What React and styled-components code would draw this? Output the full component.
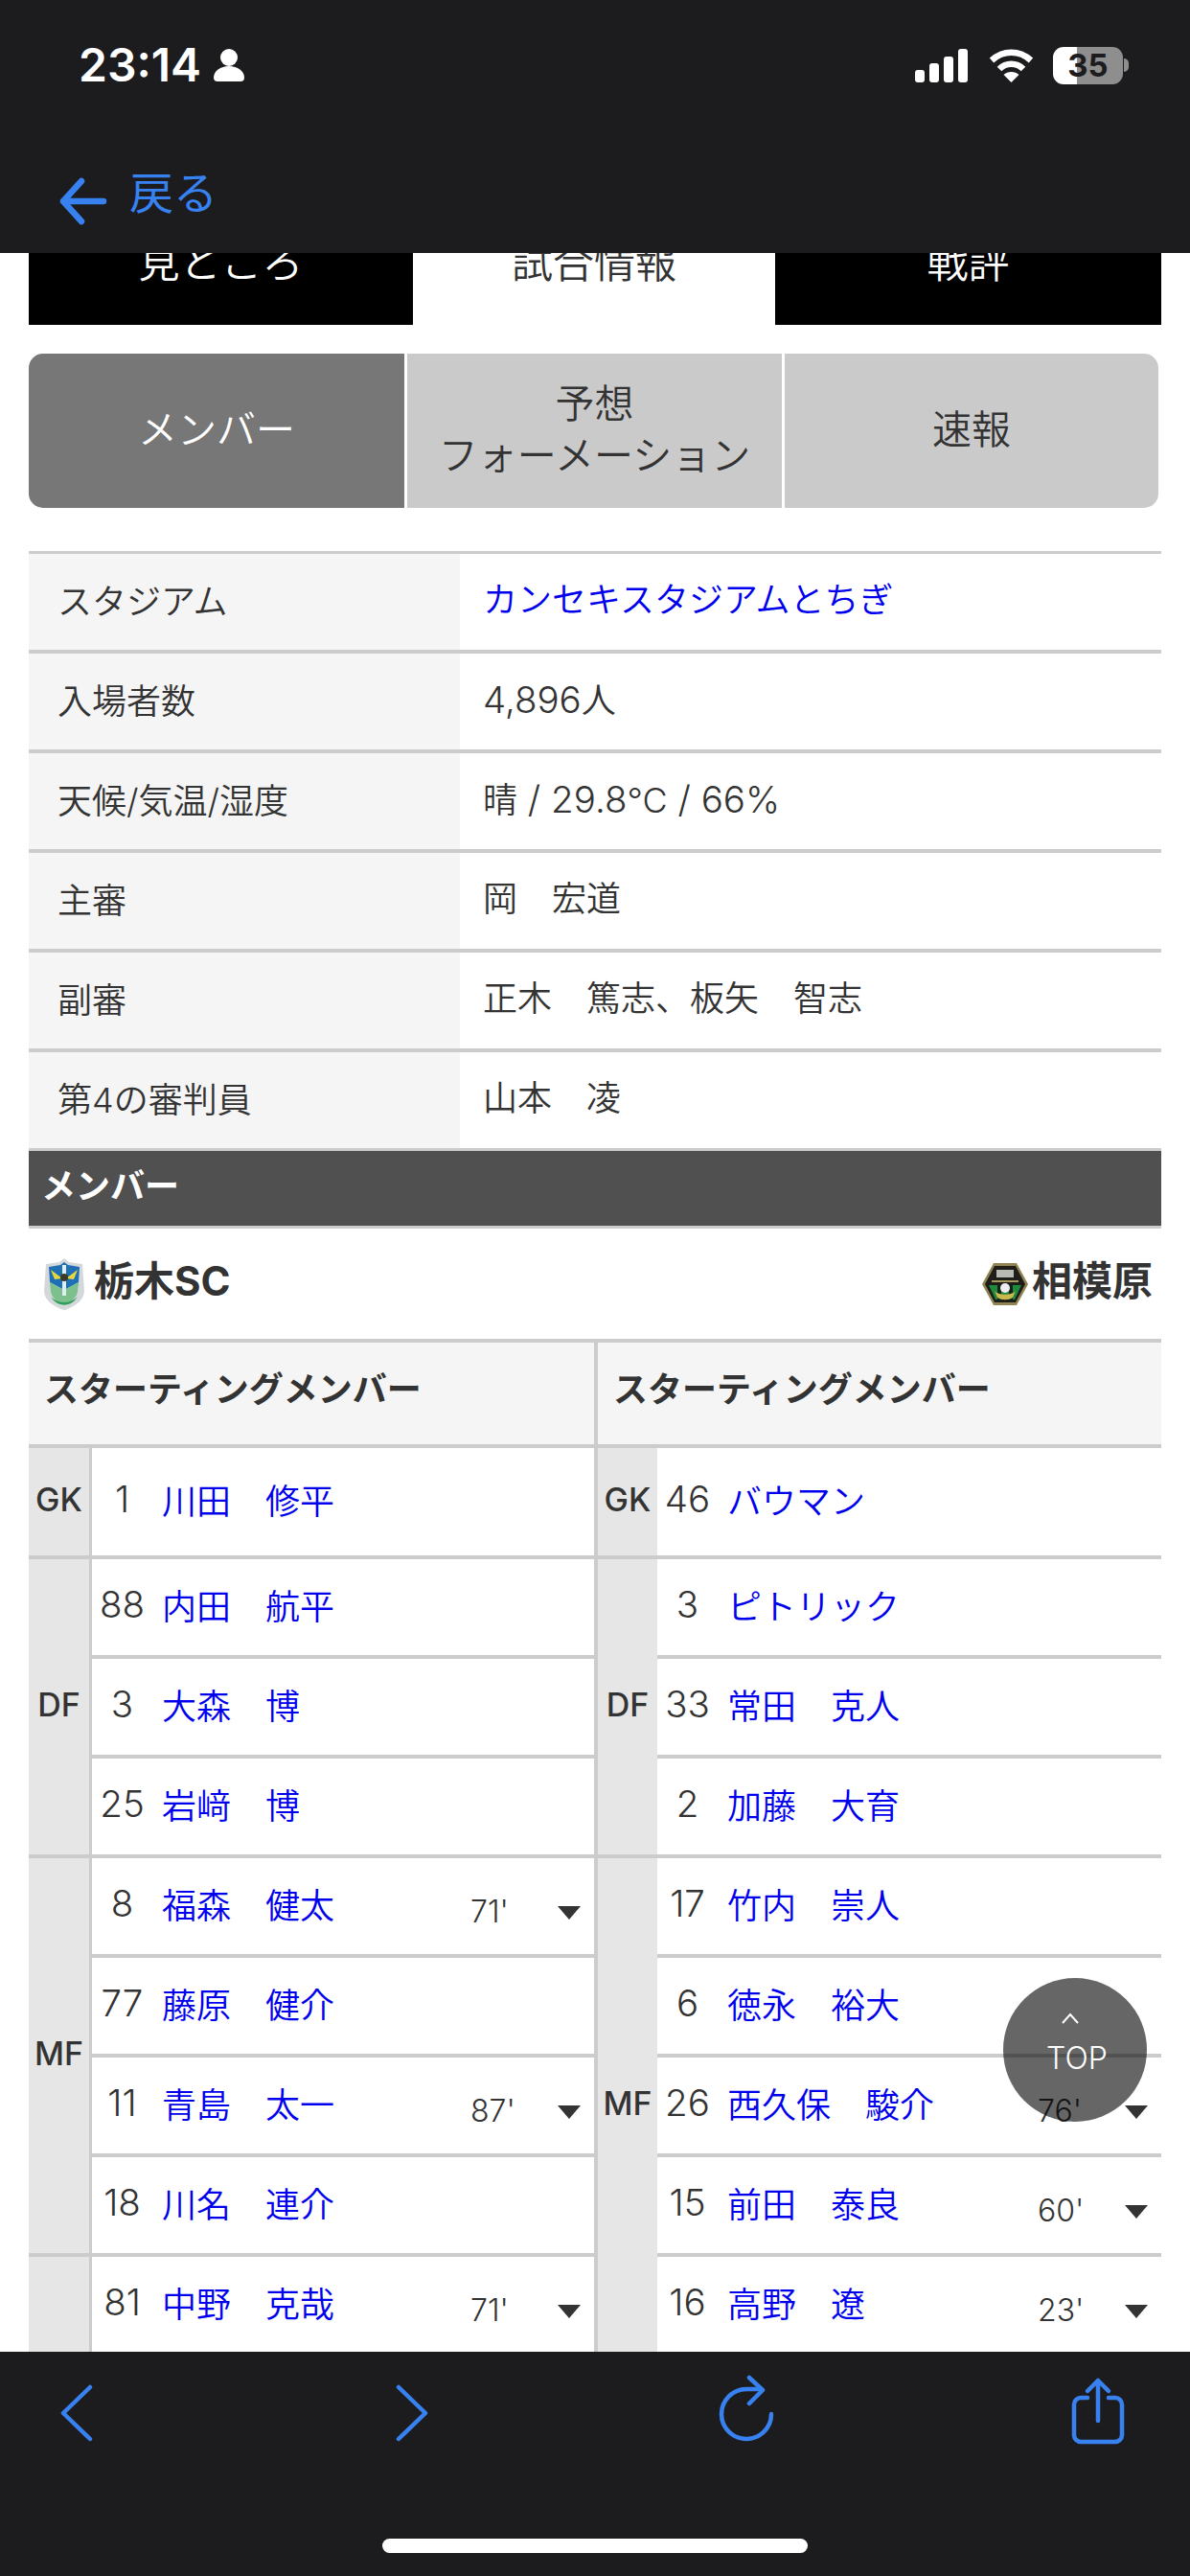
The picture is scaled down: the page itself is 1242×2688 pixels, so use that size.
import React from 'react';
import styled, { createGlobalStyle } from 'styled-components';

const GlobalStyle = createGlobalStyle`
  html, body {
    margin: 0;
    padding: 0;
    background: #fff;
  }
  body {
    font-family: Inter, "Noto Sans CJK JP", sans-serif;
    font-weight: 350;
    color: #333;
  }
`;

const BLUE = '#3781f0';
const LINE = '#ccc';
const LINK = '#0000ee';

const Page = styled.div`
  position: relative;
  width: 1242px;
  height: 2688px;
  display: flex;
  flex-direction: column;
  overflow: hidden;
`;

// Safari chrome, top
const TopBar = styled.header`
  position: relative;
  z-index: 2;
  flex: none;
  height: 264px;
  background: #1c1c1e;
  box-sizing: border-box;
  padding-top: 40px;
`;

const StatusRow = styled.div`
  display: flex;
  align-items: center;
  height: 56px;
  padding: 0 64px 0 82px;
`;

const Clock = styled.span`
  font-size: 48px;
  font-weight: 600;
  line-height: 56px;
  color: #fff;
`;

const PersonIcon = styled.svg`
  width: 32px;
  height: 34px;
  margin-left: 13px;
  fill: #fff;
`;

const StatusRight = styled.div`
  display: flex;
  align-items: center;
  margin-left: auto;
`;

const SignalBars = styled.div`
  display: flex;
  align-items: flex-end;
  gap: 5px;
  height: 35px;
`;

const SignalBar = styled.i`
  display: block;
  width: 10px;
  height: ${p => p.$h}px;
  border-radius: 3px;
  background: #fff;
`;

const WifiIcon = styled.svg`
  width: 47px;
  height: 36px;
  margin-left: 22px;
`;

const Battery = styled.div`
  width: 73px;
  height: 39px;
  margin-left: 20px;
  border-radius: 11px;
  background: linear-gradient(90deg, #fff 0 25px, #8e8e8e 25px);
  display: flex;
  align-items: center;
  justify-content: center;
  font-size: 33px;
  font-weight: 700;
  line-height: 39px;
  color: #1c1c1e;
`;

const BatteryNub = styled.i`
  display: block;
  width: 5px;
  height: 14px;
  margin-left: 1px;
  border-radius: 0 5px 5px 0;
  background: #8e8e8e;
`;

const BackRow = styled.div`
  display: flex;
  align-items: center;
  margin-top: 69px;
  padding-left: 59px;
  color: ${BLUE};
  font-size: 46px;
  font-weight: 400;
  line-height: 56px;
`;

const BackArrow = styled.svg`
  width: 54px;
  height: 54px;
  margin-right: 22px;
  margin-top: 18px;
`;

// Page body
const Content = styled.main`
  position: relative;
  flex: 1;
  min-height: 0;
  overflow: hidden;
  padding: 0 30px;
`;

const Tabs = styled.nav`
  display: grid;
  grid-template-columns: 401px 378px 403px;
  margin-top: -35px;
`;

const Tab = styled.div`
  height: 110px;
  box-sizing: border-box;
  padding-top: 17px;
  text-align: center;
  font-size: 43px;
  line-height: 56px;
  background: ${p => (p.$active ? '#fff' : '#000')};
  color: ${p => (p.$active ? '#333' : '#fff')};
`;

const Segments = styled.div`
  display: grid;
  grid-template-columns: 392px 391px 1fr;
  gap: 3px;
  width: 1179px;
  height: 161px;
  margin-top: 30px;
  border-radius: 15px;
  overflow: hidden;
`;

const Segment = styled.div`
  display: flex;
  align-items: center;
  justify-content: center;
  box-sizing: border-box;
  padding-bottom: 4px;
  text-align: center;
  font-size: 41px;
  line-height: 54px;
  background: ${p => (p.$active ? '#777' : '#cacaca')};
  color: ${p => (p.$active ? '#fff' : '#333')};
`;

const InfoTable = styled.section`
  margin-top: 45px;
  border-top: 3px solid ${LINE};
`;

const InfoRow = styled.div`
  display: grid;
  grid-template-columns: 450px 1fr;
  height: 100px;
  border-bottom: ${p => (p.$last ? 3 : 4)}px solid ${LINE};
`;

const InfoLabel = styled.div`
  display: flex;
  align-items: center;
  padding: 0 0 7px 30px;
  background: #f5f5f5;
  font-size: 36px;
`;

const InfoValue = styled.div`
  padding-left: 24px;
  font-size: 36px;
  line-height: 96px;
  white-space: pre;
`;

const Latin = styled.span`
  font-size: 38.5px;
`;

const Link = styled.span`
  color: ${LINK};
`;

const SectionBar = styled.h2`
  margin: 0;
  height: 78px;
  box-sizing: border-box;
  padding-left: 13px;
  background: #505050;
  color: #fff;
  font-size: 36px;
  font-weight: 700;
  line-height: 74px;
`;

const Teams = styled.div`
  display: flex;
  align-items: center;
  justify-content: space-between;
  height: 115px;
  border-top: 3px solid ${LINE};
  padding: 0 9px 0 15px;
`;

const Team = styled.div`
  display: flex;
  align-items: center;
  gap: ${p => p.$gap}px;
`;

const TeamName = styled.span`
  margin-top: -6px;
  font-size: 42px;
  font-weight: 700;
  line-height: 50px;
`;

const MemberTable = styled.section`
  display: grid;
  grid-template-columns: 590px 4px 1fr;
  border-top: 4px solid ${LINE};
`;

const Divider = styled.div`
  background: ${LINE};
`;

const Column = styled.div`
  display: flex;
  flex-direction: column;
  min-width: 0;
`;

const ColumnHead = styled.div`
  height: 106px;
  box-sizing: border-box;
  padding: 0 0 14px 16px;
  display: flex;
  align-items: center;
  background: #f5f5f5;
  font-size: 36px;
  font-weight: 700;
`;

const Group = styled.div`
  display: flex;
  border-top: 4px solid ${LINE};
`;

const PosCell = styled.div`
  flex: none;
  width: ${p => (p.$right ? 62 : 66)}px;
  box-sizing: border-box;
  padding-bottom: 6px;
  display: flex;
  align-items: center;
  justify-content: center;
  background: #e6e6e6;
  border-right: ${p => (p.$right ? 'none' : `3px solid ${LINE}`)};
  font-size: 34px;
  font-weight: 500;
`;

const PosRows = styled.div`
  flex: 1;
  min-width: 0;
  display: flex;
  flex-direction: column;
`;

const PlayerRow = styled.div`
  display: flex;
  align-items: center;
  height: ${p => (p.$tall ? 112 : 100)}px;
  padding-bottom: 7px;
  box-sizing: border-box;
  & + & {
    border-top: 4px solid ${LINE};
    height: 104px;
  }
`;

const Num = styled.span`
  flex: none;
  width: 63px;
  text-align: center;
  font-size: 38.5px;
`;

const Name = styled.span`
  margin-left: 10px;
  font-size: 36px;
  color: ${LINK};
  white-space: pre;
`;

const SubInfo = styled.div`
  flex: none;
  width: 115px;
  margin: 0 14px 0 auto;
  padding-top: 17px;
  display: flex;
  align-items: center;
  justify-content: space-between;
  font-size: 32px;
`;

const SubMark = styled.i`
  display: block;
  width: 0;
  height: 0;
  margin-top: 4px;
  border-left: 12px solid transparent;
  border-right: 12px solid transparent;
  border-top: 14px solid #333;
`;

const TopButton = styled.div`
  position: absolute;
  left: 1047px;
  top: 2064px;
  z-index: 1;
  width: 150px;
  height: 150px;
  border-radius: 50%;
  background: rgba(0, 0, 0, 0.6);
  display: flex;
  flex-direction: column;
  align-items: center;
  color: #fff;
  font-size: 32px;
  line-height: 36px;
`;

const TopChevron = styled.svg`
  width: 18px;
  height: 12px;
  margin: 36px 10px 0 0;
`;

const TopLabel = styled.span`
  margin-top: 18px;
  margin-left: 4px;
`;

// Safari chrome, bottom
const BottomBar = styled.footer`
  position: relative;
  z-index: 2;
  flex: none;
  height: 234px;
  box-sizing: border-box;
  background: #1c1c1e;
  padding: 24px 0 0 50px;
`;

const Toolbar = styled.div`
  display: grid;
  grid-template-columns: 350px 350px 366px 60px;
  height: 80px;
  align-items: center;
`;

const ToolIcon = styled.svg`
  width: 60px;
  height: 80px;
  fill: none;
  stroke: ${BLUE};
  stroke-width: 4.5;
  stroke-linecap: round;
  stroke-linejoin: round;
`;

const HomeBar = styled.div`
  width: 444px;
  height: 15px;
  margin: 91px 0 0 349px;
  border-radius: 8px;
  background: #fff;
`;

const TochigiCrest = () => (
  <svg width="44" height="56" viewBox="0 0 44 56">
    <path d="M22 1l5 4 14 2 2 28c0 10-11 17-21 20C12 52 1 45 1 35L3 7l14-2z" fill="#d5d8da" />
    <path d="M22 5l4 3 12 2-1 16-15 8-15-8-1-16 12-2z" fill="#1f6fb5" />
    <path d="M7 26l15 8 15-8-1 10c-1 6-8 12-14 14-6-2-13-8-14-14z" fill="#7cc08e" />
    <path d="M8 13l12 9-8 1zM36 13L24 22l8 1z" fill="#e6d93c" />
    <path d="M20 8h4v32h-4z" fill="#dfeef2" />
    <circle cx="22" cy="21" r="4" fill="#3b3a2c" />
    <path d="M8 41c8 8 20 8 28 0l-3 4c-6 6-16 6-22 0z" fill="#2f9e5b" />
  </svg>
);

const SagamiharaCrest = () => (
  <svg width="50" height="46" viewBox="0 0 50 46">
    <path d="M13 1h24l12 22-12 22H13L1 23z" fill="#8f8452" />
    <path d="M14 4h22l10 19-10 19H14L4 23z" fill="#1f1d1a" />
    <path d="M8 24h34l-7 15H15z" fill="#1f8a3d" />
    <path d="M17 24h4v18h-4zM29 24h4v18h-4z" fill="#14241a" />
    <path d="M16 8h18v8H16z" fill="#b9b9b4" />
    <path d="M11 19h28v2H11z" fill="#a49a5e" />
    <path d="M14 30c4 5 18 5 22 0l-3 7c-4 3-12 3-16 0z" fill="#c9b84b" />
    <circle cx="25" cy="27" r="5" fill="#eee" />
  </svg>
);

const info = [
  ['スタジアム', <Link>カンセキスタジアムとちぎ</Link>],
  ['入場者数', <><Latin>4,896</Latin>人</>],
  ['天候/気温/湿度', <>晴<Latin> / 29.8</Latin>℃<Latin> / 66%</Latin></>],
  ['主審', '岡　宏道'],
  ['副審', '正木　篤志、板矢　智志'],
  ['第4の審判員', '山本　凌'],
];

const home = [
  { pos: 'GK', rows: [{ n: 1, name: '川田　修平' }], tall: true },
  { pos: 'DF', rows: [{ n: 88, name: '内田　航平' }, { n: 3, name: '大森　博' }, { n: 25, name: '岩﨑　博' }] },
  { pos: 'MF', rows: [{ n: 8, name: '福森　健太', sub: "71'" }, { n: 77, name: '藤原　健介' }, { n: 11, name: '青島　太一', sub: "87'" }, { n: 18, name: '川名　連介' }] },
  { pos: '', rows: [{ n: 81, name: '中野　克哉', sub: "71'" }] },
];

const away = [
  { pos: 'GK', rows: [{ n: 46, name: 'バウマン' }], tall: true },
  { pos: 'DF', rows: [{ n: 3, name: 'ピトリック' }, { n: 33, name: '常田　克人' }, { n: 2, name: '加藤　大育' }] },
  { pos: 'MF', rows: [{ n: 17, name: '竹内　崇人' }, { n: 6, name: '徳永　裕大' }, { n: 26, name: '西久保　駿介', sub: "76'" }, { n: 15, name: '前田　泰良', sub: "60'" }, { n: 16, name: '高野　遼', sub: "23'" }] },
];

const Lineup = ({ groups, right }) => (
  <Column>
    <ColumnHead>スターティングメンバー</ColumnHead>
    {groups.map((group, i) => (
      <Group key={i}>
        <PosCell $right={right}>{group.pos}</PosCell>
        <PosRows>
          {group.rows.map(row => (
            <PlayerRow key={row.n} $tall={group.tall}>
              <Num>{row.n}</Num>
              <Name>{row.name}</Name>
              {row.sub && (
                <SubInfo>
                  <span>{row.sub}</span>
                  <SubMark />
                </SubInfo>
              )}
            </PlayerRow>
          ))}
        </PosRows>
      </Group>
    ))}
  </Column>
);

export default function App() {
  return (
    <Page>
      <GlobalStyle />
      <TopBar>
        <StatusRow>
          <Clock>23:14</Clock>
          <PersonIcon viewBox="0 0 32 34">
            <circle cx="16" cy="9" r="9" />
            <path d="M0 30c0-7 7-12 16-12s16 5 16 12c0 3-2 4-4 4H4c-2 0-4-1-4-4z" />
          </PersonIcon>
          <StatusRight>
            <SignalBars>
              <SignalBar $h={13} />
              <SignalBar $h={20} />
              <SignalBar $h={27} />
              <SignalBar $h={35} />
            </SignalBars>
            <WifiIcon viewBox="0 0 47 36" fill="none" stroke="#fff" strokeWidth="6.5">
              <path d="M3 13c12-11 29-11 41 0" />
              <path d="M11 22c7-7 18-7 25 0" />
              <path d="M23.5 36l-8-8c4-4 12-4 16 0z" fill="#fff" stroke="none" />
            </WifiIcon>
            <Battery>35</Battery>
            <BatteryNub />
          </StatusRight>
        </StatusRow>
        <BackRow>
          <BackArrow viewBox="0 0 54 54" fill="none" stroke={BLUE} strokeWidth="6.5" strokeLinecap="round" strokeLinejoin="round">
            <path d="M26 6L7 27l19 21M7 27h42" />
          </BackArrow>
          戻る
        </BackRow>
      </TopBar>

      <Content>
        <Tabs>
          <Tab>見ところ</Tab>
          <Tab $active>試合情報</Tab>
          <Tab>戦評</Tab>
        </Tabs>

        <Segments>
          <Segment $active>メンバー</Segment>
          <Segment>予想<br />フォーメーション</Segment>
          <Segment>速報</Segment>
        </Segments>

        <InfoTable>
          {info.map(([label, value], i) => (
            <InfoRow key={label} $last={i === info.length - 1}>
              <InfoLabel>{label}</InfoLabel>
              <InfoValue>{value}</InfoValue>
            </InfoRow>
          ))}
        </InfoTable>

        <SectionBar>メンバー</SectionBar>
        <Teams>
          <Team $gap={9}><TochigiCrest /><TeamName>栃木SC</TeamName></Team>
          <Team $gap={3}><SagamiharaCrest /><TeamName>相模原</TeamName></Team>
        </Teams>

        <MemberTable>
          <Lineup groups={home} />
          <Divider />
          <Lineup groups={away} right />
        </MemberTable>
      </Content>

      <BottomBar>
        <Toolbar>
          <ToolIcon viewBox="0 0 60 80"><path d="M44 13L16 40l28 27" /></ToolIcon>
          <ToolIcon viewBox="0 0 60 80"><path d="M16 13l28 27-28 27" /></ToolIcon>
          <ToolIcon viewBox="0 0 60 80">
            <path d="M55 41a26 26 0 1 1-26-26h15" />
            <path d="M32 3l14 13-14 14" />
          </ToolIcon>
          <ToolIcon viewBox="0 0 60 80">
            <path d="M19 24h-7a7 7 0 0 0-7 7v32a7 7 0 0 0 7 7h36a7 7 0 0 0 7-7V31a7 7 0 0 0-7-7h-7" />
            <path d="M30 48V6M19 17L30 6l11 11" />
          </ToolIcon>
        </Toolbar>
        <HomeBar />
      </BottomBar>

      <TopButton>
        <TopChevron viewBox="0 0 18 12" fill="none" stroke="#fff" strokeWidth="2">
          <path d="M1 11l8-9 8 9" />
        </TopChevron>
        <TopLabel>TOP</TopLabel>
      </TopButton>
    </Page>
  );
}
